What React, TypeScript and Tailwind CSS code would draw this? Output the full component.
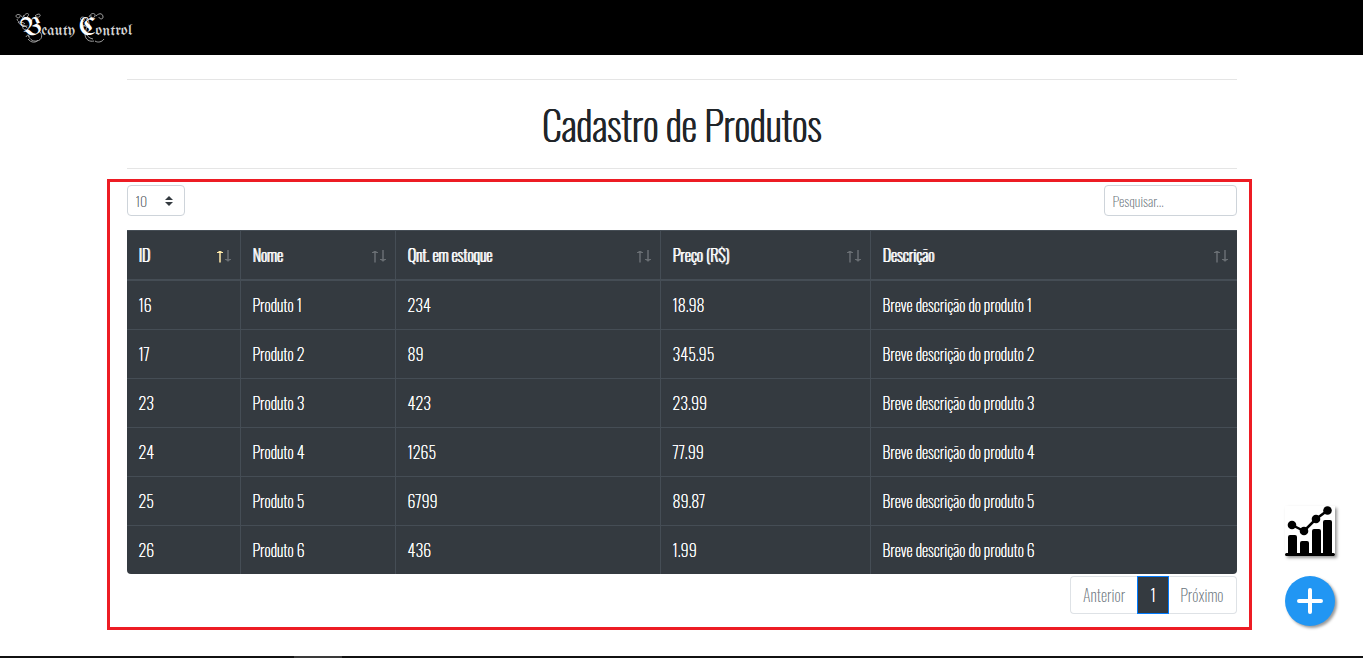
type Product = { id: number; name: string; stock: string; price: string; description: string };

const products: Product[] = [
  { id: 16, name: 'Produto 1', stock: '234', price: '18.98', description: 'Breve descrição do produto 1' },
  { id: 17, name: 'Produto 2', stock: '89', price: '345.95', description: 'Breve descrição do produto 2' },
  { id: 23, name: 'Produto 3', stock: '423', price: '23.99', description: 'Breve descrição do produto 3' },
  { id: 24, name: 'Produto 4', stock: '1265', price: '77.99', description: 'Breve descrição do produto 4' },
  { id: 25, name: 'Produto 5', stock: '6799', price: '89.87', description: 'Breve descrição do produto 5' },
  { id: 26, name: 'Produto 6', stock: '436', price: '1.99', description: 'Breve descrição do produto 6' },
];

const columns = [
  { title: 'ID', width: 'w-[113px]' },
  { title: 'Nome', width: 'w-[155px]' },
  { title: 'Qnt. em estoque', width: 'w-[265px]' },
  { title: 'Preço (R$)', width: 'w-[210px]' },
  { title: 'Descrição', width: 'w-auto' },
];

function SortArrows({ ascending }: { ascending: boolean }) {
  return (
    <svg width="16" height="16" viewBox="0 0 16 16" fill="none" strokeWidth="1.5" aria-hidden="true">
      <g stroke={ascending ? '#ffe9a8' : '#696e73'}>
        <path d="M4 15.500V4" />
        <path d="M1 5.500h6M2.500 4.500h3" strokeWidth="1" />
      </g>
      <g stroke="#696e73">
        <path d="M12 3v11.500" />
        <path d="M9 12.500h6M10.500 13.500h3" strokeWidth="1" />
      </g>
    </svg>
  );
}

function Logo() {
  return (
    <a href="#" className="relative flex h-8 items-center" aria-label="Beauty Control">
      <svg className="absolute -left-px top-0 text-neutral-400" width="120" height="32" viewBox="0 0 120 32" fill="none" stroke="currentColor" strokeWidth="1" aria-hidden="true">
        <path d="M9 8C6 1 1 2 1 4s4 3 4 0M2 7c1 5 6 2 8 5M8 5C11 0 15 1 13 4s-5 2-4-1M3 10c3 5 7 1 9 6M9 13c-3 2 0 6 2 4M13 27c3 4 8 4 10 1M11 25c1-3 4-2 3 0M20 4c3-3 6-2 5 0s-4 1-5 0M25 20c3 3 2 8-3 9s-8-3-9-6" />
        <path d="M73 9c-4-6-9-4-7-1s4 1 3-1M66 11c1 4 5 2 7 5M70 13c-4 2-2 7 1 6M74 5c2-5 7-4 6-1s-5 2-4-1M81 4c4-4 7-2 7 1s-4 2-4 0M70 22c0 6 5 8 9 7M80 29c3 2 7 1 9-2M72 6c3 3 1 8 4 11M72 15c-3 5 0 11 6 12" />
      </svg>
      <span className="relative flex items-baseline gap-1 pt-1 pl-1 font-['UnifrakturMaguntia','UnifrakturCook','Liberation_Serif',serif] text-base leading-8 font-normal text-neutral-300">
        <span><span className="text-2xl leading-8 text-white">B</span>eauty</span>
        <span><span className="text-2xl leading-8 text-white">C</span>ontrol</span>
      </span>
    </a>
  );
}

function ChartIcon() {
  return (
    <svg width="50" height="50" viewBox="0 0 50 50" aria-hidden="true">
      <path d="M3 47V31q0-2 2-2h5q2 0 2 2v16zM15 47V37q0-2 2-2h5q2 0 2 2v10zM27 47V25q0-2 2-2h5q2 0 2 2v22zM38 47V16q0-2 2-2h5q2 0 2 2v31z" />
      <path d="M1.500 48.500h47" stroke="#000" strokeWidth="3" strokeLinecap="round" />
      <path d="M7 19l12 6L31 13 42.500 4.500" fill="none" stroke="#000" strokeWidth="2.500" />
      <circle cx="7" cy="19" r="4.300" />
      <circle cx="19" cy="25" r="4.300" />
      <circle cx="31" cy="13" r="4.300" />
      <circle cx="42.500" cy="4.500" r="4.300" />
    </svg>
  );
}

export default function App() {
  return (
    <div className="flex min-h-screen flex-col bg-white font-['Oswald','Roboto_Condensed',sans-serif] text-base font-extralight text-[#212529]">
      <header className="flex h-[55px] shrink-0 items-center bg-black px-4">
        <Logo />
      </header>

      <main className="mx-auto w-full max-w-[1110px] grow">
        <hr className="mt-6 border-[#e5e5e5]" />
        <h1 className="py-5 text-center text-[40px] leading-[48px] font-extralight [text-shadow:1px_0_0_currentColor,0_0_0_currentColor]">Cadastro de Produtos</h1>
        <hr className="border-[#e5e5e5]" />

        <section className="mt-[10px] mr-[-15px] -ml-5 border-3 border-[#ed1c24] pt-[3px] pr-3 pb-[13px] pl-[17px]">
          <div className="flex items-start justify-between">
            <div className="relative">
              <select aria-label="Resultados por página" defaultValue="10" className="block h-[31px] w-[58px] appearance-none rounded border border-[#ced4da] bg-white pl-2 text-sm text-[#495057]">
                <option>10</option>
                <option>25</option>
                <option>50</option>
                <option>100</option>
              </select>
              <svg className="pointer-events-none absolute top-[11px] right-3" width="8" height="10" viewBox="0 0 4 5" fill="#343a40" aria-hidden="true">
                <path d="M2 0L0 2h4zm0 5L0 3h4z" />
              </svg>
            </div>
            <input type="search" aria-label="Pesquisar" placeholder="Pesquisar..." className="h-[31px] w-[133px] rounded border border-[#ced4da] bg-white px-2 text-sm text-[#495057] placeholder:text-[#6c757d]" />
          </div>

          <table className="mt-[14px] w-full table-fixed border-separate border-spacing-0 overflow-hidden rounded-b bg-[#343a40] text-left text-white">
            <thead>
              <tr>
                {columns.map((column, i) => (
                  <th key={column.title} scope="col" aria-sort={i === 0 ? 'ascending' : undefined} className={`${column.width} border-t border-b-2 border-l border-[#454d55] p-0 font-extralight first:border-l-0`}>
                    <button type="button" className="flex h-12 w-full items-center justify-between pr-2 pl-3 [text-shadow:1px_0_0_currentColor,0_0_0_currentColor]">
                      {column.title}
                      <SortArrows ascending={i === 0} />
                    </button>
                  </th>
                ))}
              </tr>
            </thead>
            <tbody>
              {products.map((product) => (
                <tr key={product.id} className="group">
                  {[product.id, product.name, product.stock, product.price, product.description].map((value, i) => (
                    <td key={i} className="h-[49px] border-b border-l border-[#454d55] px-3 py-0 leading-6 [text-shadow:0_0_0_currentColor] first:border-l-0 group-last:h-12 group-last:border-b-0">
                      {value}
                    </td>
                  ))}
                </tr>
              ))}
            </tbody>
          </table>

          <nav aria-label="Paginação" className="mt-[2px] flex justify-end">
            <button type="button" disabled className="h-[38px] rounded-l border border-r-0 border-[#dee2e6] px-3 text-[#6c757d]">Anterior</button>
            <button type="button" aria-current="page" className="h-[38px] w-8 border border-[#007bff] bg-[#343a40] text-white [text-shadow:0_0_0_currentColor]">1</button>
            <button type="button" disabled className="h-[38px] rounded-r border border-l-0 border-[#dee2e6] pr-3 pl-[11px] text-[#6c757d]">Próximo</button>
          </nav>
        </section>
      </main>

      <div className="fixed right-7 bottom-8 flex flex-col gap-5">
        <button type="button" aria-label="Relatórios" className="size-[50px] bg-white shadow-[2px_2px_3px_#999]">
          <ChartIcon />
        </button>
        <button type="button" aria-label="Adicionar produto" className="flex size-[50px] items-center justify-center rounded-full bg-[#2196f3] shadow-[2px_2px_3px_#999]">
          <svg width="26" height="26" viewBox="0 0 26 26" stroke="#fff" strokeWidth="4" strokeLinecap="round" aria-hidden="true">
            <path d="M13 2v22M2 13h22" />
          </svg>
        </button>
      </div>

      <footer className="flex h-[2px] bg-[#111]">
        <div className="ml-[294px] w-12 bg-[#3a3a3a]" />
      </footer>
    </div>
  );
}
